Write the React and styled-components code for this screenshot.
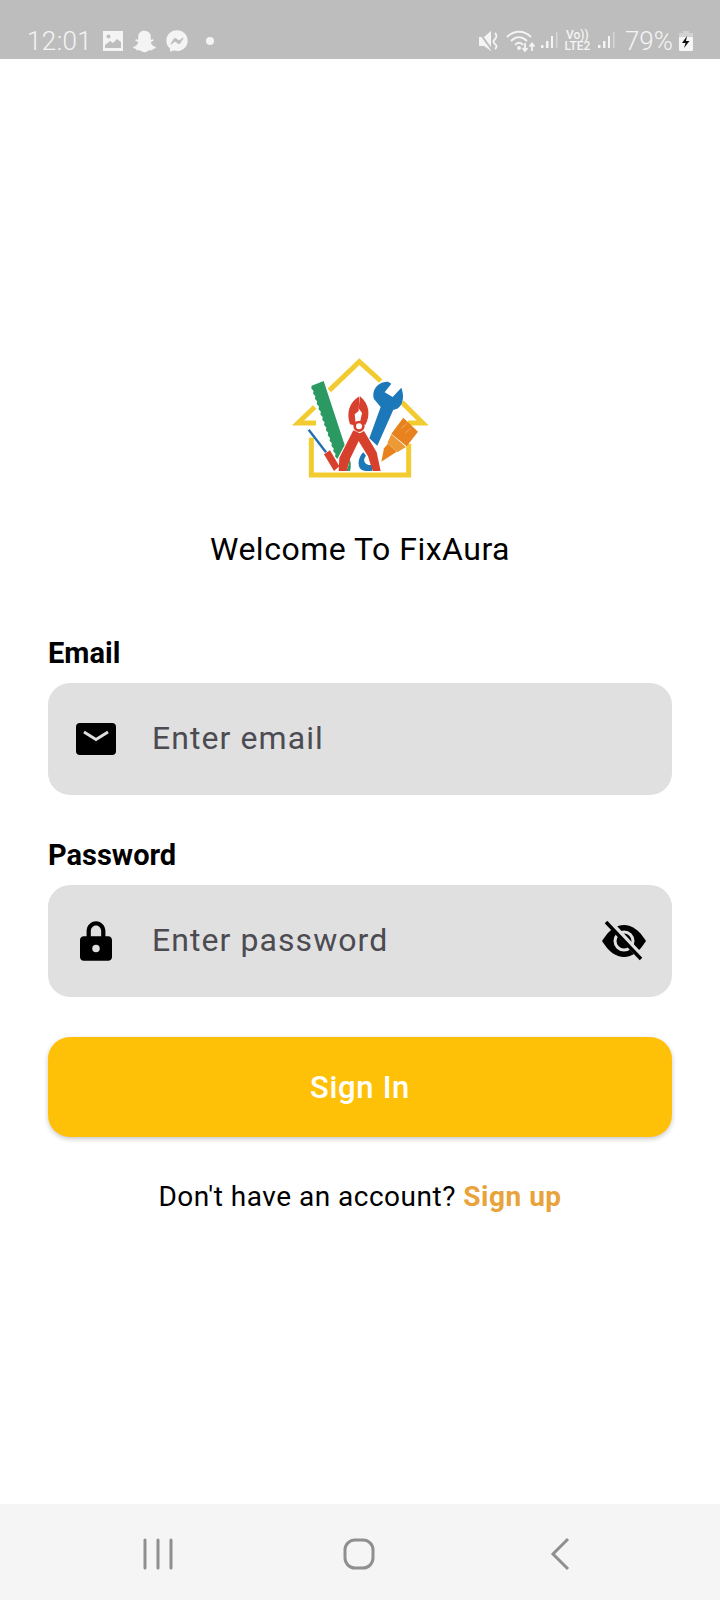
import React from "react";
import styled, { createGlobalStyle } from "styled-components";
import { FaSnapchatGhost, FaFacebookMessenger } from "react-icons/fa";

const Global = createGlobalStyle`
  html, body { margin: 0; padding: 0; background: #fff; }
  * { box-sizing: border-box; }
`;

const Page = styled.div`
  width: 720px;
  height: 1600px;
  display: flex;
  flex-direction: column;
  background: #fff;
  font-family: Roboto, "Liberation Sans", sans-serif;
  overflow: hidden;
`;

const StatusBar = styled.header`
  height: 59px;
  flex: none;
  background: #bdbdbd;
  color: #f4f4f4;
  display: flex;
  align-items: center;
  padding: 23px 27px 0 27px;
`;
const StatusTime = styled.span`
  font-size: 26px;
  font-weight: 300;
  letter-spacing: 0.4px;
  width: 76px;
`;
const StatusLeft = styled.div`
  display: flex;
  align-items: center;
  gap: 10px;
`;
const StatusDot = styled.span`
  width: 8px;
  height: 8px;
  border-radius: 50%;
  background: #f4f4f4;
  margin-left: 8px;
`;
const StatusRight = styled.div`
  margin-left: auto;
  display: flex;
  align-items: center;
  gap: 6px;
`;
const VolteLabel = styled.span`
  font-size: 12px;
  line-height: 11px;
  font-weight: 500;
  text-align: center;
  width: 27px;
  margin: 0 1px 0 0;
`;
const Percent = styled.span`
  font-size: 26px;
  font-weight: 300;
  margin-left: 4px;
`;
const WifiSlot = styled.span`
  display: flex;
  margin-right: -1px;
`;

const Main = styled.main`
  flex: 1;
  display: flex;
  flex-direction: column;
  padding: 286px 48px 0;
`;
const LogoWrap = styled.div`
  display: flex;
  justify-content: center;
`;
const Welcome = styled.h1`
  margin: 44px 0 0;
  font-size: 32px;
  line-height: 40px;
  font-weight: 400;
  letter-spacing: 0.5px;
  text-align: center;
  color: #000;
`;
const Label = styled.label`
  display: block;
  margin-top: ${(p) => p.$top}px;
  font-size: 29px;
  line-height: 32px;
  font-weight: 700;
  color: #000;
`;
const Field = styled.div`
  margin-top: 14px;
  height: 112px;
  border-radius: 22px;
  background: #e0e0e0;
  display: flex;
  align-items: center;
  padding: 0 26px 0 28px;
`;
const FieldIcon = styled.span`
  width: 40px;
  height: 42px;
  display: flex;
  align-items: center;
  justify-content: center;
  color: #000;
  flex: none;
`;
const Placeholder = styled.span`
  margin-left: 36px;
  padding-bottom: 3px;
  flex: 1;
  font-size: 32px;
  letter-spacing: 1.07px;
  color: #4c4b52;
`;
const SubmitButton = styled.button`
  margin-top: 40px;
  height: 100px;
  width: 100%;
  border: 0;
  border-radius: 22px;
  background: #ffc107;
  color: #fff;
  font-family: inherit;
  font-size: 31px;
  font-weight: 500;
  letter-spacing: 0.7px;
  box-shadow: 0 2px 5px rgba(0, 0, 0, 0.22);
`;
const Footer = styled.p`
  margin: 40px 0 0;
  font-size: 28px;
  line-height: 40px;
  letter-spacing: 0.5px;
  text-align: center;
  color: #000;
`;
const SignUp = styled.a`
  font-weight: 700;
  color: #e8a33a;
`;

const NavBar = styled.nav`
  height: 96px;
  flex: none;
  background: #f5f5f5;
  display: grid;
  grid-template-columns: repeat(3, 201px);
  justify-content: center;
  align-items: center;
  padding: 4px 2px 0 0;
`;
const NavCell = styled.div`
  display: flex;
  justify-content: center;
`;

const saw = (() => {
  const pts = [[131, 108], [194, 300], [172, 342]];
  const n = 28;
  for (let i = 0; i <= n; i++) {
    const t = i / n;
    const x = 172 + (95 - 172) * t;
    const y = 342 + (122 - 342) * t;
    pts.push([x - (i % 2 ? 4 : 0), y]);
  }
  return pts.map((p) => p.join(",")).join(" ");
})();

const Logo = () => (
  <svg width="160" height="140" viewBox="0 0 480 420" role="img" aria-label="FixAura">
    <g fill="none" stroke="#f2cb30" strokeWidth="15" strokeLinejoin="miter">
      <path d="M148 136 L238 50 L302 108" />
      <path d="M104 186 L54 234 H108" />
      <path d="M366 172 L428 234 H384" />
      <path d="M94 278 V390 H386 V296" />
    </g>
    <polygon points={saw} fill="#2a9a62" />
    <path d="M86 254 L138 322" stroke="#1f6fb0" strokeWidth="7" fill="none" />
    <path d="M132 328 L150 316 L178 364 L162 378 Z" fill="#d8402e" />
    <path d="M198 378 Q208 364 208 340 Q216 358 210 378 Z" fill="#2a9a62" />
    <path
      d="M324 110 C292 110 274 136 282 162 L302 186 L268 280 L292 302 L340 194 C366 192 376 160 364 128 L338 156 L314 142 L334 116 Z"
      fill="#1c78b8"
    />
    <path d="M250 322 C232 338 228 378 258 378 H276 V360 C254 362 246 346 258 332 Z" fill="#1c78b8" />
    <g fill="#d8402e">
      <path d="M238 154 C208 172 198 204 210 238 L228 242 L224 208 L236 198 Z" />
      <path d="M240 154 C268 176 272 212 256 240 L240 232 L246 204 L236 190 Z" />
      <path d="M220 256 L178 338 L176 378 H200 L210 342 L246 268 Z" />
      <path d="M252 258 L290 322 L302 378 H278 L264 334 L226 272 Z" />
    </g>
    <circle cx="237" cy="244" r="13" fill="#fff" stroke="#d8402e" strokeWidth="8" />
    <path d="M370 218 L414 260 L380 304 L334 266 Z" fill="#e8821e" />
    <path d="M364 250 L380 236 M376 264 L392 250" stroke="#f2a85a" strokeWidth="3" />
    <path d="M334 268 L378 306 L352 322 L322 294 Z" fill="#eb9a35" />
    <path d="M324 296 L350 320 L304 350 L312 310 Z" fill="#e8821e" />
  </svg>
);

const MailIcon = () => (
  <svg width="40" height="32" viewBox="0 0 40 32">
    <rect width="40" height="32" rx="4" fill="#000" />
    <path d="M8 9 L20 16.500 L32 9" fill="none" stroke="#e0e0e0" strokeWidth="2.800" />
  </svg>
);

const LockIcon = () => (
  <svg width="32" height="42" viewBox="0 0 34 42">
    <path
      d="M4 16h3v-5.500C7 4.700 11.400 0 17 0s10 4.700 10 10.500V16h3c2.200 0 4 1.800 4 4v18c0 2.200-1.800 4-4 4H4c-2.200 0-4-1.800-4-4V20c0-2.200 1.800-4 4-4zm7.500 0h11v-5.500c0-3.200-2.400-6-5.500-6s-5.500 2.800-5.500 6V16z"
      fill="#000"
      fillRule="evenodd"
    />
    <circle cx="17" cy="29" r="4" fill="#e0e0e0" />
  </svg>
);

const EyeOffIcon = () => (
  <svg width="44" height="40" viewBox="0 0 44 40">
    <path d="M0 20 C7 9 14 4 22 4 C30 4 37 9 44 20 C37 31 30 36 22 36 C14 36 7 31 0 20 Z" fill="#000" />
    <circle cx="22" cy="20" r="9" fill="none" stroke="#e0e0e0" strokeWidth="3" />
    <path d="M5 -1 L41 38" stroke="#e0e0e0" strokeWidth="6.500" />
    <path d="M4 1 L39 38" stroke="#000" strokeWidth="3.500" />
  </svg>
);

const GalleryIcon = () => (
  <svg width="20" height="20" viewBox="0 0 20 20">
    <path d="M0 0h20v20H0z M2 17h16v-6l-4-3-4 4-3-2-5 4z" fill="#f4f4f4" fillRule="evenodd" />
    <circle cx="5.500" cy="5.500" r="2" fill="#bdbdbd" />
  </svg>
);

const MuteIcon = () => (
  <svg width="22" height="22" viewBox="0 0 22 22">
    <path d="M1 7h5l7-6v20l-7-5H1z" fill="#f4f4f4" />
    <path d="M1 2 L14 20" stroke="#bdbdbd" strokeWidth="2" />
    <path d="M17 3q3 3 0 6t0 5 0 5" fill="none" stroke="#f4f4f4" strokeWidth="1.800" />
  </svg>
);

const WifiIcon = () => (
  <svg width="30" height="22" viewBox="0 0 30 22" fill="none" stroke="#f4f4f4" strokeWidth="1.800">
    <path d="M1 7 C8 0 18 0 25 7" />
    <path d="M5 11 C10 6 16 6 21 11" />
    <path d="M9 15 C11 12 15 12 17 15" />
    <circle cx="13" cy="18" r="1" fill="#f4f4f4" />
    <path d="M19 13v8M16.500 18l2.500 3 2.500-3" />
    <path d="M26 21v-7M23.500 16.500l2.500-3 2.500 3" />
  </svg>
);

const SignalIcon = () => (
  <svg width="17" height="18" viewBox="0 0 17 18">
    <rect x="0" y="13" width="2.500" height="3" fill="#f4f4f4" />
    <rect x="5" y="9" width="2.500" height="7" fill="#f4f4f4" />
    <rect x="10" y="4" width="2" height="12" fill="#f4f4f4" />
    <rect x="15" y="0" width="1.500" height="16" fill="#d6d6d6" />
  </svg>
);

const BatteryIcon = () => (
  <svg width="14" height="20" viewBox="0 0 14 20">
    <rect x="4" y="0" width="6" height="3" fill="#d2d2d2" />
    <rect x="0" y="2" width="14" height="5" fill="#d2d2d2" />
    <rect x="0" y="6" width="14" height="14" rx="1" fill="#f6f6f6" />
    <path d="M8 5 L3 12 H6.500 L5 17 L10.500 10 H7 Z" fill="#111" />
  </svg>
);

const MenuGlyph = () => (
  <svg width="30" height="32" viewBox="0 0 30 32" fill="none" stroke="#8f8f8f" strokeWidth="3" strokeLinecap="round">
    <path d="M2 2v28M15 2v28M28 2v28" />
  </svg>
);
const HomeGlyph = () => (
  <svg width="32" height="32" viewBox="0 0 32 32" fill="none" stroke="#8f8f8f" strokeWidth="3">
    <rect x="2" y="2" width="28" height="28" rx="10" />
  </svg>
);
const BackGlyph = () => (
  <svg width="20" height="34" viewBox="0 0 20 34" fill="none" stroke="#8f8f8f" strokeWidth="3">
    <path d="M18 2 L3 17 L18 32" />
  </svg>
);

export default function App() {
  return (
    <Page>
      <Global />
      <StatusBar>
        <StatusTime>12:01</StatusTime>
        <StatusLeft>
          <GalleryIcon />
          <FaSnapchatGhost size={23} />
          <FaFacebookMessenger size={22} />
          <StatusDot />
        </StatusLeft>
        <StatusRight>
          <MuteIcon />
          <WifiSlot>
            <WifiIcon />
          </WifiSlot>
          <SignalIcon />
          <VolteLabel>
            Vo))
            <br />
            LTE2
          </VolteLabel>
          <SignalIcon />
          <Percent>79%</Percent>
          <BatteryIcon />
        </StatusRight>
      </StatusBar>
      <Main>
        <LogoWrap>
          <Logo />
        </LogoWrap>
        <Welcome>Welcome To FixAura</Welcome>
        <Label $top={68}>Email</Label>
        <Field>
          <FieldIcon>
            <MailIcon />
          </FieldIcon>
          <Placeholder>Enter email</Placeholder>
        </Field>
        <Label $top={44}>Password</Label>
        <Field>
          <FieldIcon>
            <LockIcon />
          </FieldIcon>
          <Placeholder>Enter password</Placeholder>
          <EyeOffIcon />
        </Field>
        <SubmitButton>Sign In</SubmitButton>
        <Footer>
          Don't have an account? <SignUp>Sign up</SignUp>
        </Footer>
      </Main>
      <NavBar>
        <NavCell>
          <MenuGlyph />
        </NavCell>
        <NavCell>
          <HomeGlyph />
        </NavCell>
        <NavCell>
          <BackGlyph />
        </NavCell>
      </NavBar>
    </Page>
  );
}
